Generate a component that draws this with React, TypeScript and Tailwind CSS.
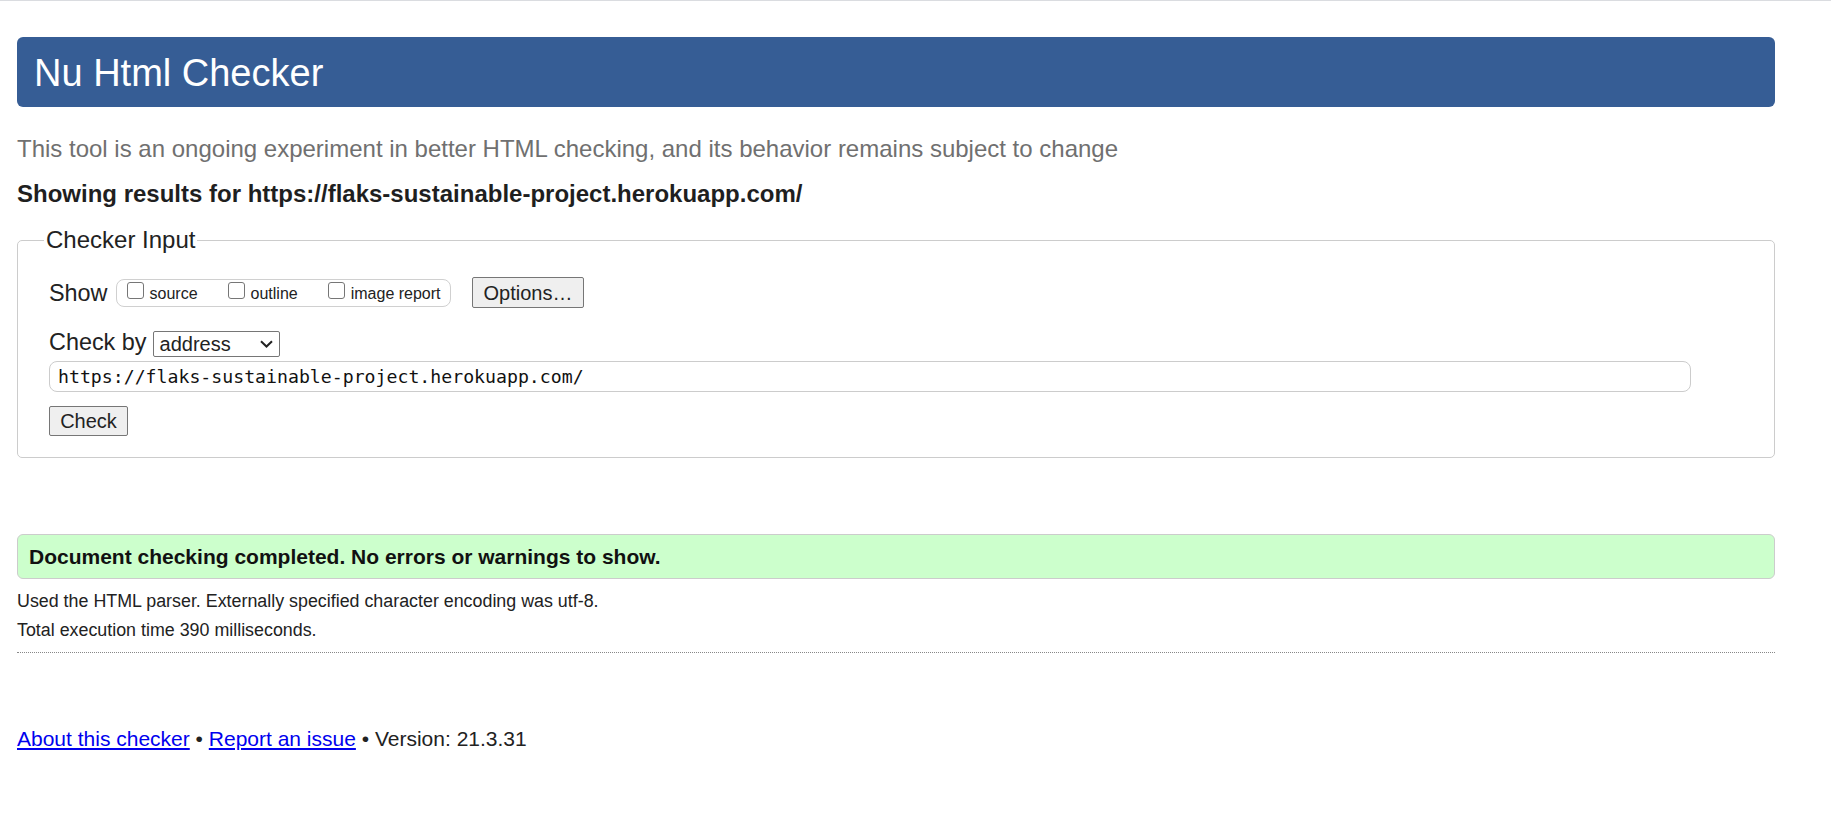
import React from 'react';

const URL = 'https://flaks-sustainable-project.herokuapp.com/';

function Checkbox({ label }: { label: string }) {
  return (
    <label className="flex items-end">
      <input
        type="checkbox"
        className="appearance-none w-[17px] h-[17px] mb-[4px] border border-[#767676] rounded-[3px] bg-white"
      />
      <span className="ml-[6px] text-[16px] leading-[18px] text-[#222]">{label}</span>
    </label>
  );
}

export default function App() {
  return (
    <div className="min-h-screen bg-white border-t border-[#dadce0] font-['Liberation_Sans',Arial,sans-serif] text-[#222]">
      <div className="pl-[17px] w-[1775px]">
        {/* Title bar */}
        <h1 className="mt-[36px] h-[70px] rounded-[6px] bg-[#365d95] text-white text-[38px] leading-[44px] pt-[14px] pl-[17px] font-normal">
          Nu Html Checker
        </h1>

        <p className="mt-[29px] text-[24px] leading-[25px] text-[#707070]">
          This tool is an ongoing experiment in better HTML checking, and its behavior remains subject to change
        </p>

        <p className="mt-[20px] text-[24px] leading-[26px] font-bold text-[#1f1f1f]">
          Showing results for {URL}
        </p>

        {/* Checker input form */}
        <fieldset className="mt-[19px] border border-[#cccccc] rounded-[5px] px-[26px] pt-[23px] pb-[21px]">
          <legend className="px-[2px] text-[24px] leading-[28px]">Checker Input</legend>

          <div className="ml-[5px]">
            <div className="flex items-center h-[31px]">
              <span className="text-[23.4px] leading-[28px]">Show</span>
              <div className="ml-[8px] h-[28px] flex items-end gap-[30px] border border-[#d0d0d0] rounded-[8px] pl-[10px] pr-[9px] pb-[3px]">
                <Checkbox label="source" />
                <Checkbox label="outline" />
                <Checkbox label="image report" />
              </div>
              <button className="ml-[21px] h-[31px] px-[11px] text-[20px] leading-[24px] bg-[#efefef] border border-[#767676] rounded-[2px]">
                Options…
              </button>
            </div>

            <div className="mt-[23px] flex items-center h-[26px]">
              <span className="text-[23.4px] leading-[22px] mb-[4px]">Check by</span>
              <div className="ml-[6px] w-[127px] h-[26px] flex items-center justify-between border border-[#767676] rounded-[2px] pl-[6px] pr-[6px] text-[20px] leading-[24px]">
                <span>address</span>
                <svg width="13" height="8" viewBox="0 0 13 8" fill="none">
                  <path d="M1 1.2 L6.5 6.5 L12 1.2" stroke="#222" strokeWidth="2" />
                </svg>
              </div>
            </div>

            <input
              readOnly
              value={URL}
              className="mt-[4px] block w-[1642px] h-[31px] border border-[#cccccc] rounded-[8px] pl-[8px] font-['DejaVu_Sans_Mono',monospace] text-[18.2px] text-[#111] outline-none"
            />

            <button className="mt-[14px] block w-[79px] h-[30px] text-[20px] leading-[24px] bg-[#efefef] border border-[#767676] rounded-[2px]">
              Check
            </button>
          </div>
        </fieldset>

        {/* Result */}
        <div className="mt-[76px] h-[45px] flex items-center bg-[#ccffcc] border border-[#cccccc] rounded-[6px] px-[11px] font-bold text-[21px] text-[#111]">
          Document checking completed. No errors or warnings to show.
        </div>

        <p className="mt-[8px] text-[17.85px] leading-[29px]">
          Used the HTML parser. Externally specified character encoding was utf-8.
        </p>
        <p className="text-[17.85px] leading-[29px]">Total execution time 390 milliseconds.</p>

        <hr className="mt-[7px] border-0 border-t border-dotted border-[#888]" />

        <p className="mt-[74px] text-[21px] leading-[24px]">
          <a href="#" className="text-[#0000ee] underline">About this checker</a>
          {' • '}
          <a href="#" className="text-[#0000ee] underline">Report an issue</a>
          {' • Version: 21.3.31'}
        </p>
      </div>
    </div>
  );
}
